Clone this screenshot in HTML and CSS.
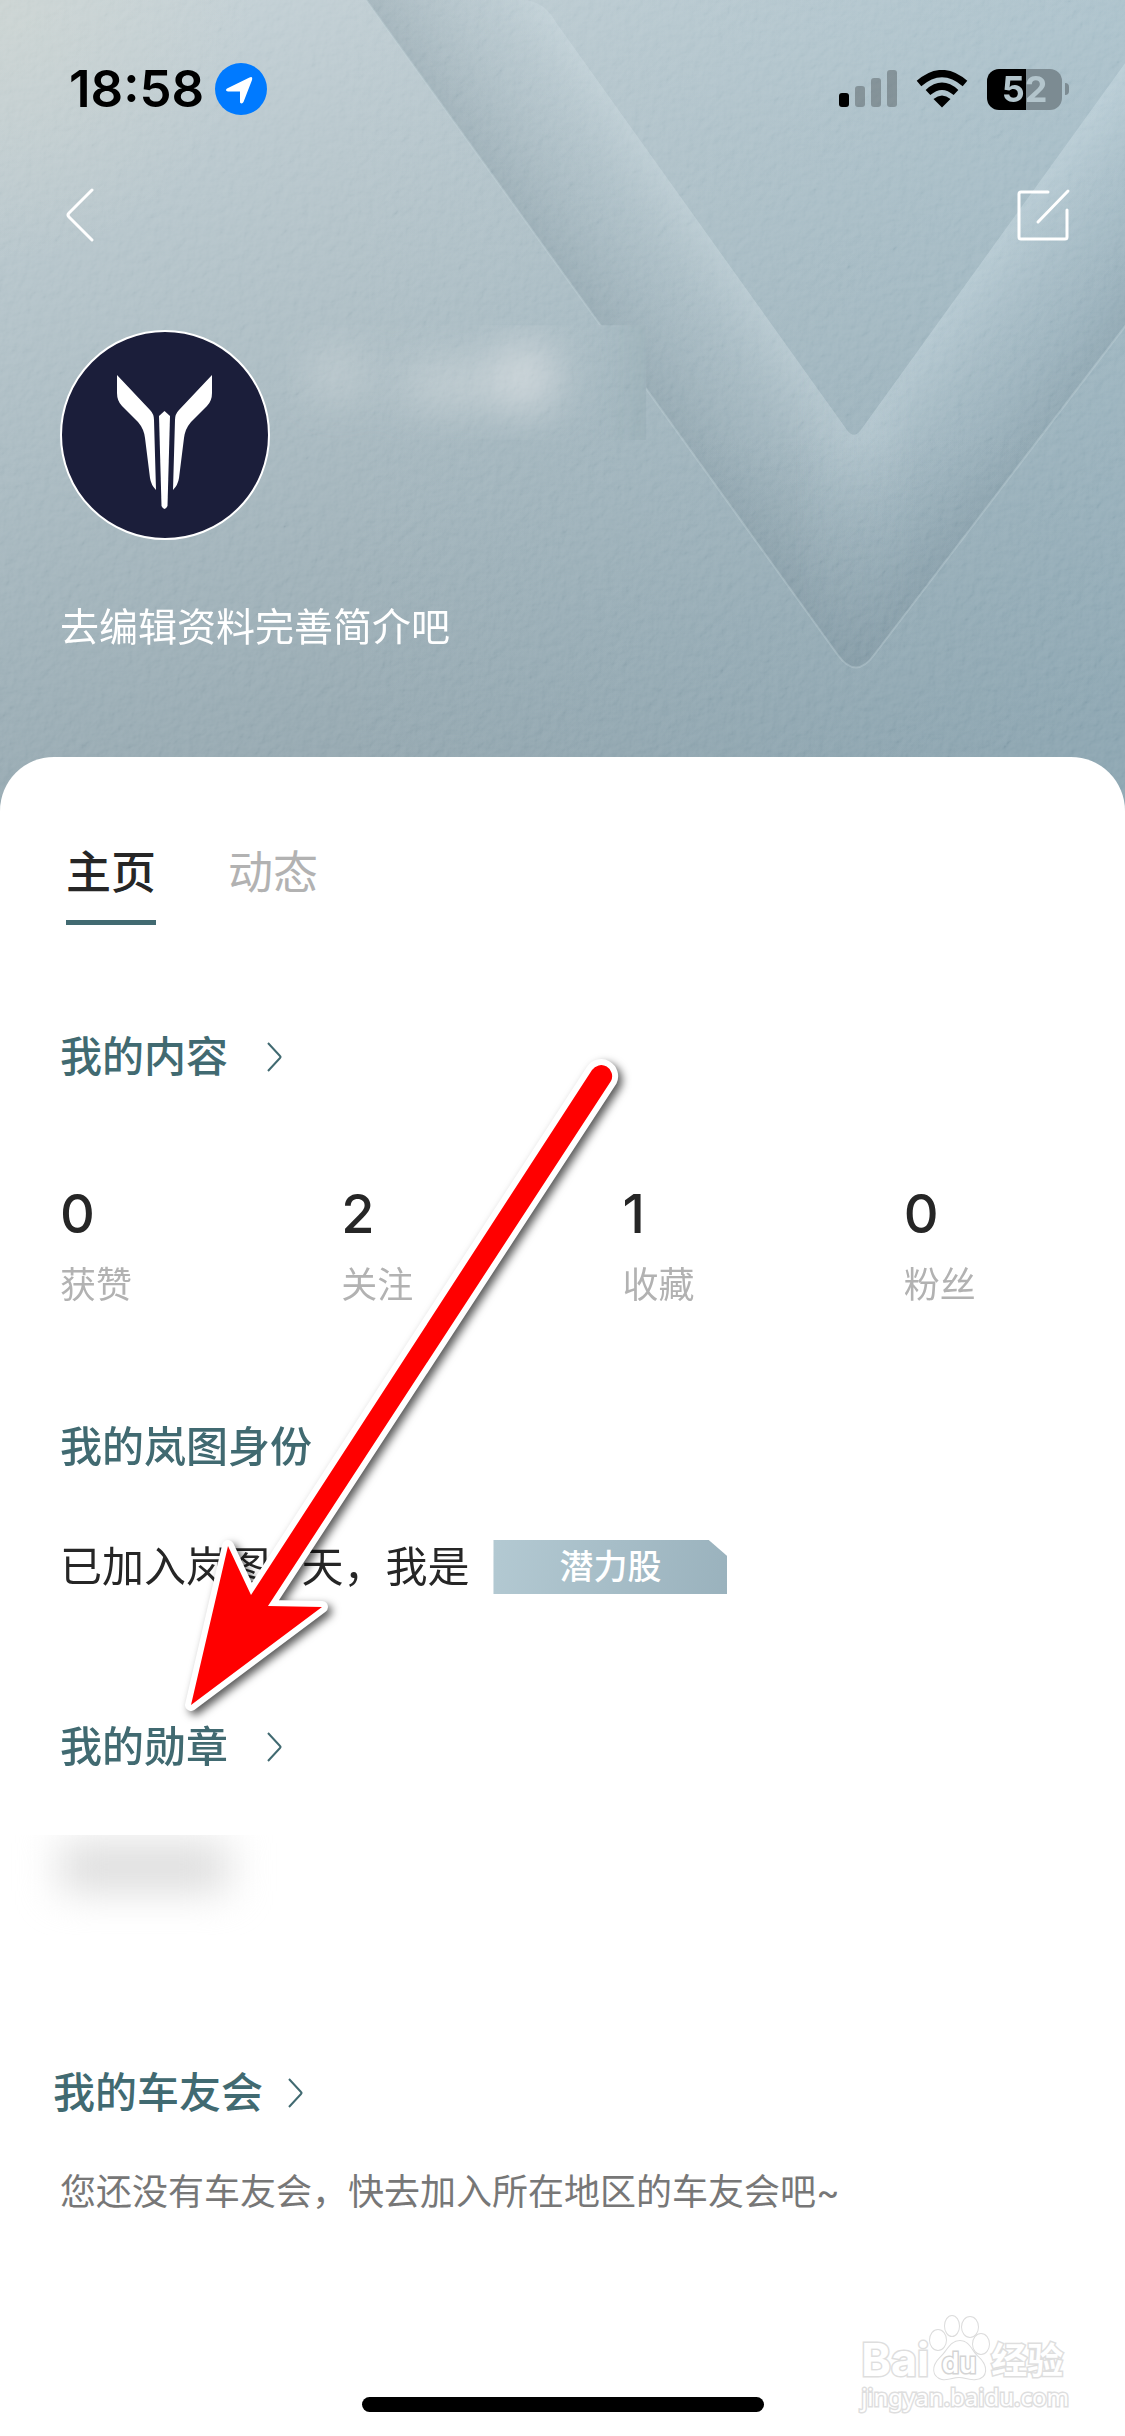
FILE: index.html
```html
<!DOCTYPE html>
<html lang="zh-CN">
<head>
<meta charset="utf-8">
<meta name="viewport" content="width=device-width, initial-scale=1">
<title>我的主页</title>
<link rel="stylesheet" href="styles.css">
</head>
<body>
<div class="page">
  <header class="hero">
    <svg class="hero-art" viewBox="0 0 1125 812" preserveAspectRatio="xMidYMin slice" aria-hidden="true">
      <defs>
        <linearGradient id="base" gradientUnits="userSpaceOnUse" x1="330" y1="-60" x2="560" y2="850">
          <stop offset="0" stop-color="#c3d0d5"/>
          <stop offset=".45" stop-color="#a9bac1"/>
          <stop offset="1" stop-color="#8a9ea7"/>
        </linearGradient>
        <linearGradient id="cool" x1="0" y1="0" x2="1" y2="0">
          <stop offset=".3" stop-color="#8fbcd2" stop-opacity="0"/>
          <stop offset="1" stop-color="#8fbcd2" stop-opacity=".22"/>
        </linearGradient>
        <radialGradient id="warm" gradientUnits="userSpaceOnUse" cx="0" cy="0" r="260">
          <stop offset="0" stop-color="#d2d6ce" stop-opacity=".5"/>
          <stop offset="1" stop-color="#d2d6ce" stop-opacity="0"/>
        </radialGradient>
        <linearGradient id="armLeft" gradientUnits="userSpaceOnUse" x1="560" y1="270" x2="693" y2="176">
          <stop offset="0" stop-color="#7f949e" stop-opacity=".42"/>
          <stop offset=".5" stop-color="#a9bbc3" stop-opacity=".3"/>
          <stop offset="1" stop-color="#d9e6eb" stop-opacity=".5"/>
        </linearGradient>
        <linearGradient id="armRight" gradientUnits="userSpaceOnUse" x1="960" y1="284" x2="1078" y2="370">
          <stop offset="0" stop-color="#d2e2e9" stop-opacity=".38"/>
          <stop offset=".5" stop-color="#a9bdc7" stop-opacity=".25"/>
          <stop offset="1" stop-color="#7b929e" stop-opacity=".36"/>
        </linearGradient>
        <linearGradient id="tip" gradientUnits="userSpaceOnUse" x1="0" y1="430" x2="0" y2="664">
          <stop offset="0" stop-color="#7e95a0" stop-opacity="0"/>
          <stop offset="1" stop-color="#768d99" stop-opacity=".4"/>
        </linearGradient>
        <linearGradient id="seam" gradientUnits="userSpaceOnUse" x1="790" y1="0" x2="914" y2="0">
          <stop offset="0" stop-color="#fff"/>
          <stop offset="1" stop-color="#000"/>
        </linearGradient>
        <linearGradient id="seamReverse" gradientUnits="userSpaceOnUse" x1="790" y1="0" x2="914" y2="0">
          <stop offset="0" stop-color="#000"/>
          <stop offset="1" stop-color="#fff"/>
        </linearGradient>
        <mask id="leftMask" maskUnits="userSpaceOnUse" x="0" y="0" width="1125" height="812"><rect width="1125" height="812" fill="url(#seam)"/></mask>
        <mask id="rightMask" maskUnits="userSpaceOnUse" x="0" y="0" width="1125" height="812"><rect width="1125" height="812" fill="url(#seamReverse)"/></mask>
        <filter id="leather" x="0" y="0" width="100%" height="100%">
          <feTurbulence type="fractalNoise" baseFrequency=".11" numOctaves="3" seed="4" result="n"/>
          <feDiffuseLighting in="n" surfaceScale="2" lighting-color="#fff"><feDistantLight azimuth="225" elevation="35"/></feDiffuseLighting>
        </filter>
        <filter id="soften" x="-20%" y="-60%" width="140%" height="220%"><feGaussianBlur stdDeviation="22"/></filter>
        <clipPath id="nameClip"><rect x="290" y="321" width="355" height="113"/></clipPath>
      </defs>
      <rect width="1125" height="812" fill="url(#base)"/>
      <rect width="1125" height="812" fill="url(#cool)"/>
      <rect width="1125" height="812" fill="url(#warm)"/>
      <path mask="url(#leftMask)" fill="url(#armLeft)" d="M369 0H522Q544 0 556 22L843 424Q850 434 857 424L1125 52V312L870 646Q852 671 834 646Z"/>
      <path mask="url(#rightMask)" fill="url(#armRight)" d="M369 0H522Q544 0 556 22L843 424Q850 434 857 424L1125 52V312L870 646Q852 671 834 646Z"/>
      <path fill="url(#tip)" d="M678 430H1035L870 646Q852 671 834 646Z"/>
      <path fill="none" stroke="#c3d3da" stroke-opacity=".35" stroke-width="2" d="M369 0L834 646Q852 671 870 646L1125 312"/>
      <g clip-path="url(#nameClip)">
        <rect width="1125" height="812" fill="url(#base)"/>
        <rect width="1125" height="812" fill="url(#cool)"/>
        <g filter="url(#soften)">
          <rect x="632" y="280" width="80" height="180" fill="#90a5ae" fill-opacity=".6"/>
          <g fill="#d0d8dc">
            <ellipse cx="340" cy="370" rx="26" ry="24" fill-opacity=".6"/>
            <ellipse cx="450" cy="380" rx="50" ry="24" fill-opacity=".6"/>
            <ellipse cx="525" cy="372" rx="32" ry="34"/>
          </g>
        </g>
      </g>
      <rect class="hero-grain" width="1125" height="812" filter="url(#leather)"/>
    </svg>

    <div class="status">
      <div class="status-left">
        <span class="clock">18:58</span>
        <svg class="locate" viewBox="0 0 52 52" aria-hidden="true"><circle cx="26" cy="26" r="26" fill="#007aff"/><path d="M12 25.500L34.500 14.500Q38 13 37 17L28.500 39Q27 41.500 25 39.500V28.500H13Q9.500 27.500 12 25.500Z" fill="#fff"/></svg>
      </div>
      <div class="status-right">
        <svg class="signal" viewBox="0 0 58 38" aria-hidden="true"><rect y="23" width="10" height="14" rx="3"/><g fill="#000" fill-opacity=".25"><rect x="16" y="16" width="10" height="21" rx="3"/><rect x="32" y="8" width="10" height="29" rx="3"/><rect x="48" width="10" height="37" rx="3"/></g></svg>
        <svg class="wifi" viewBox="0 0 52 38" aria-hidden="true"><path d="M26 37.500L17.500 29Q26 22 34.500 29Z"/><g fill="none" stroke="#000" stroke-width="7"><path d="M12 22.500Q26 10 40 22.500"/><path d="M3 13.500Q26 -6.500 49 13.500"/></g></svg>
        <div class="battery"><span class="battery-body"><span>5</span><span>2</span></span><span class="battery-cap"></span></div>
      </div>
    </div>

    <nav class="bar">
      <button class="icon-button" type="button" aria-label="返回"><svg class="back" viewBox="0 0 28 54"><path d="M26 2L3 25Q1 27 3 29L26 52"/></svg></button>
      <button class="icon-button" type="button" aria-label="编辑资料"><svg class="edit" viewBox="0 0 54 54"><path d="M31 4H4Q2 4 2 6V49Q2 51 4 51H48Q50 51 50 49V22M21 34L51 3"/></svg></button>
    </nav>

    <svg class="avatar" viewBox="0 0 210 210" role="img" aria-label="头像"><circle cx="105" cy="105" r="104" fill="#1b1e3a" stroke="#fff" stroke-width="2"/><g fill="#fff"><path d="M57 45L90 80Q94 84 94 90L96 160Q91 155 90 148L85 108Q84 99 78 92L62 76Q57 71 57 63Z"/><path d="M152 45L119 80Q115 84 115 90L113 160Q118 155 119 148L124 108Q125 99 131 92L147 76Q152 71 152 63Z"/><path d="M104.500 81L110 86L107.500 176Q104.500 182 101.500 176L99 86Z"/></g></svg>
    <p class="bio">去编辑资料完善简介吧</p>
  </header>

  <main class="panel">
    <nav class="tabs">
      <a class="tab tab-active" href="#home">主页</a>
      <a class="tab" href="#moments">动态</a>
    </nav>

    <section class="content" id="home">
      <h2 class="title"><a href="#content">我的内容<svg class="chevron" viewBox="0 0 16 30"><path d="M2 1L14 14Q15 15 14 16L2 29"/></svg></a></h2>
      <dl class="stats">
        <div><dd>0</dd><dt>获赞</dt></div>
        <div><dd>2</dd><dt>关注</dt></div>
        <div><dd>1</dd><dt>收藏</dt></div>
        <div><dd>0</dd><dt>粉丝</dt></div>
      </dl>
    </section>

    <section class="identity">
      <h2 class="title">我的岚图身份</h2>
      <p class="joined"><span>已加入岚图<b class="days">1</b>天，我是</span><span class="badge">潜力股</span></p>
    </section>

    <section class="medals">
      <h2 class="title"><a href="#medals">我的勋章<svg class="chevron" viewBox="0 0 16 30"><path d="M2 1L14 14Q15 15 14 16L2 29"/></svg></a></h2>
      <div class="veil"></div>
    </section>

    <section class="club">
      <h2 class="title title-club"><a href="#club">我的车友会<svg class="chevron" viewBox="0 0 16 30"><path d="M2 1L14 14Q15 15 14 16L2 29"/></svg></a></h2>
      <p class="hint">您还没有车友会，快去加入所在地区的车友会吧~</p>
    </section>
  </main>

  <svg class="arrow" viewBox="0 0 460 680" aria-hidden="true"><path d="M412 40A11 11 0 0 1 431 51L88 576L142 577L11 675L48 516L71 565Z"/></svg>

  <div class="watermark">
    <div class="mark-row">
      <span class="mark-latin">Bai</span>
      <svg class="paw" viewBox="0 0 62 68" aria-hidden="true"><g fill="#fff" stroke="#dcdcdc" stroke-width="2"><ellipse cx="9" cy="26" rx="8" ry="10"/><ellipse cx="23" cy="12" rx="7" ry="10"/><ellipse cx="41" cy="13" rx="8" ry="10"/><ellipse cx="52" cy="30" rx="8" ry="10"/><path d="M31 27C40 27 42 36 48 42C60 52 58 64 47 65C40 66 36 63 30 63C24 63 20 66 13 65C3 62 3 52 11 44C19 37 21 27 31 27Z"/></g><text class="paw-text" x="30" y="59" text-anchor="middle">du</text></svg>
      <span class="mark-cjk">经验</span>
    </div>
    <span class="mark-url">jingyan.baidu.com</span>
  </div>
  <div class="home-indicator"></div>
</div>
</body>
</html>
```
FILE: styles.css
```css
* { box-sizing: border-box; }

body {
  margin: 0;
  background: #fff;
  color: #262626;
  font-family: Inter, "Noto Sans CJK SC", sans-serif;
}

h2, p, dl, dd { margin: 0; }
a { color: inherit; text-decoration: none; }

.page {
  position: relative;
  display: flex;
  flex-direction: column;
  min-height: 100vh;
  overflow: hidden;
}

/* Header */
.hero {
  position: relative;
  padding: 62px 54px 166px 60px;
  overflow: hidden;
  background: #9aacb4;
}
.hero > * { position: relative; }
.hero > .hero-art {
  position: absolute;
  inset: 0;
  width: 100%;
  height: 100%;
}
.hero-grain { mix-blend-mode: soft-light; opacity: .2; }

.status,
.status-left,
.status-right,
.bar,
.battery { display: flex; align-items: center; }

.status { justify-content: space-between; height: 54px; padding-left: 9px; }
.status-left { gap: 11px; }
.clock { color: #000; font-size: 51px; font-weight: 600; line-height: 54px; }
.locate { width: 52px; height: 52px; }
.status-right { gap: 19px; padding-right: 2px; }
.signal { width: 58px; height: 38px; }
.wifi { width: 52px; height: 38px; }
.battery { gap: 3px; }
.battery-body {
  display: flex;
  justify-content: center;
  width: 75px;
  height: 41px;
  border-radius: 12px;
  background: linear-gradient(90deg, #000 39px, #7c8b92 39px);
  color: #b3c5cc;
  font-size: 36px;
  font-weight: 700;
  line-height: 41px;
}
.battery-cap { width: 4px; height: 12px; border-radius: 0 4px 4px 0; background: #7c8b92; }

.bar { justify-content: space-between; margin-top: 72px; padding-left: 6px; }
.icon-button { display: block; padding: 0; border: 0; background: none; }
.icon-button svg { display: block; height: 54px; fill: none; stroke: #fff; stroke-width: 3; stroke-linecap: round; }
.back { width: 28px; }
.edit { width: 54px; }

.avatar { display: block; width: 210px; height: 210px; margin-top: 88px; }
.bio { margin-top: 57px; color: #fff; font-size: 39px; line-height: 60px; }

/* Panel */
.panel {
  position: relative;
  flex: 1;
  margin-top: -66px;
  padding-top: 82px;
  border-radius: 54px 54px 0 0;
  background: #fff;
}
.tabs { display: flex; gap: 72px; padding-left: 66px; }
.tab {
  padding-bottom: 14px;
  border-bottom: 5px solid transparent;
  color: #b2b2b2;
  font-size: 45px;
  line-height: 67px;
}
.tab-active { border-color: #416a71; color: #262626; font-weight: 500; }

.title {
  padding-left: 60px;
  color: #416a71;
  font-size: 42px;
  font-weight: 500;
  line-height: 60px;
}
.title a { display: inline-flex; align-items: center; gap: 38px; }
.title-club { padding-left: 53px; }
.title-club a { gap: 24px; }
.chevron { width: 16px; height: 30px; fill: none; stroke: #416a71; stroke-width: 2; }

.content { margin-top: 102px; }
.stats { display: grid; grid-template-columns: repeat(4, 1fr); margin-top: 97px; }
.stats div { display: flex; flex-direction: column; padding-left: 60px; }
.stats dd { font-size: 54px; font-weight: 500; line-height: 60px; }
.stats dt { order: 1; margin-top: 14px; color: #b2b2b2; font-size: 36px; line-height: 54px; }

.identity { margin-top: 105px; }
.joined {
  display: flex;
  align-items: center;
  gap: 24px;
  margin-top: 60px;
  padding-left: 60px;
  font-size: 42px;
  line-height: 60px;
}
.days { padding: 0 7px; color: #416a71; font-weight: 500; }
.badge {
  width: 234px;
  background: linear-gradient(100deg, #b3c9d2, #9ab2bd);
  clip-path: polygon(0 0, 92% 0, 100% 30%, 100% 100%, 0 100%);
  color: #fff;
  font-size: 34px;
  font-weight: 500;
  line-height: 54px;
  text-align: center;
}

.medals { margin-top: 120px; }
.veil {
  height: 100px;
  margin-top: 58px;
  overflow: hidden;
}
.veil::before {
  content: "";
  display: block;
  width: 168px;
  height: 48px;
  margin: 8px 0 0 60px;
  background: #dcdcdc;
  filter: blur(20px);
}

.club { margin-top: 128px; }
.hint { margin-top: 42px; padding-left: 60px; color: #777; font-size: 36px; line-height: 54px; }

/* Overlays */
.arrow {
  position: absolute;
  top: 1030px;
  left: 180px;
  width: 460px;
  height: 680px;
  overflow: visible;
  fill: #f00;
  stroke: #fff;
  stroke-width: 12;
  stroke-linejoin: round;
  paint-order: stroke;
  filter: drop-shadow(4px 4px 4px rgba(0, 0, 0, .65));
}
.watermark {
  position: absolute;
  right: 56px;
  bottom: 24px;
  color: #fff;
  -webkit-text-stroke: 3px #dedede;
  paint-order: stroke fill;
}
.mark-row { display: flex; align-items: flex-end; }
.mark-latin { font-size: 45px; font-weight: 700; line-height: 45px; }
.mark-cjk { font-size: 36px; font-weight: 700; line-height: 42px; }
.paw { width: 62px; height: 68px; }
.paw-text {
  fill: #fff;
  stroke: #d4d4d4;
  stroke-width: 3px;
  paint-order: stroke;
  font-size: 28px;
  font-weight: 600;
}
.mark-url { display: block; font: 24px/30px "Noto Sans", sans-serif; }
.home-indicator {
  position: absolute;
  bottom: 24px;
  left: 50%;
  width: 402px;
  height: 15px;
  margin-left: -201px;
  border-radius: 8px;
  background: #000;
}
```
